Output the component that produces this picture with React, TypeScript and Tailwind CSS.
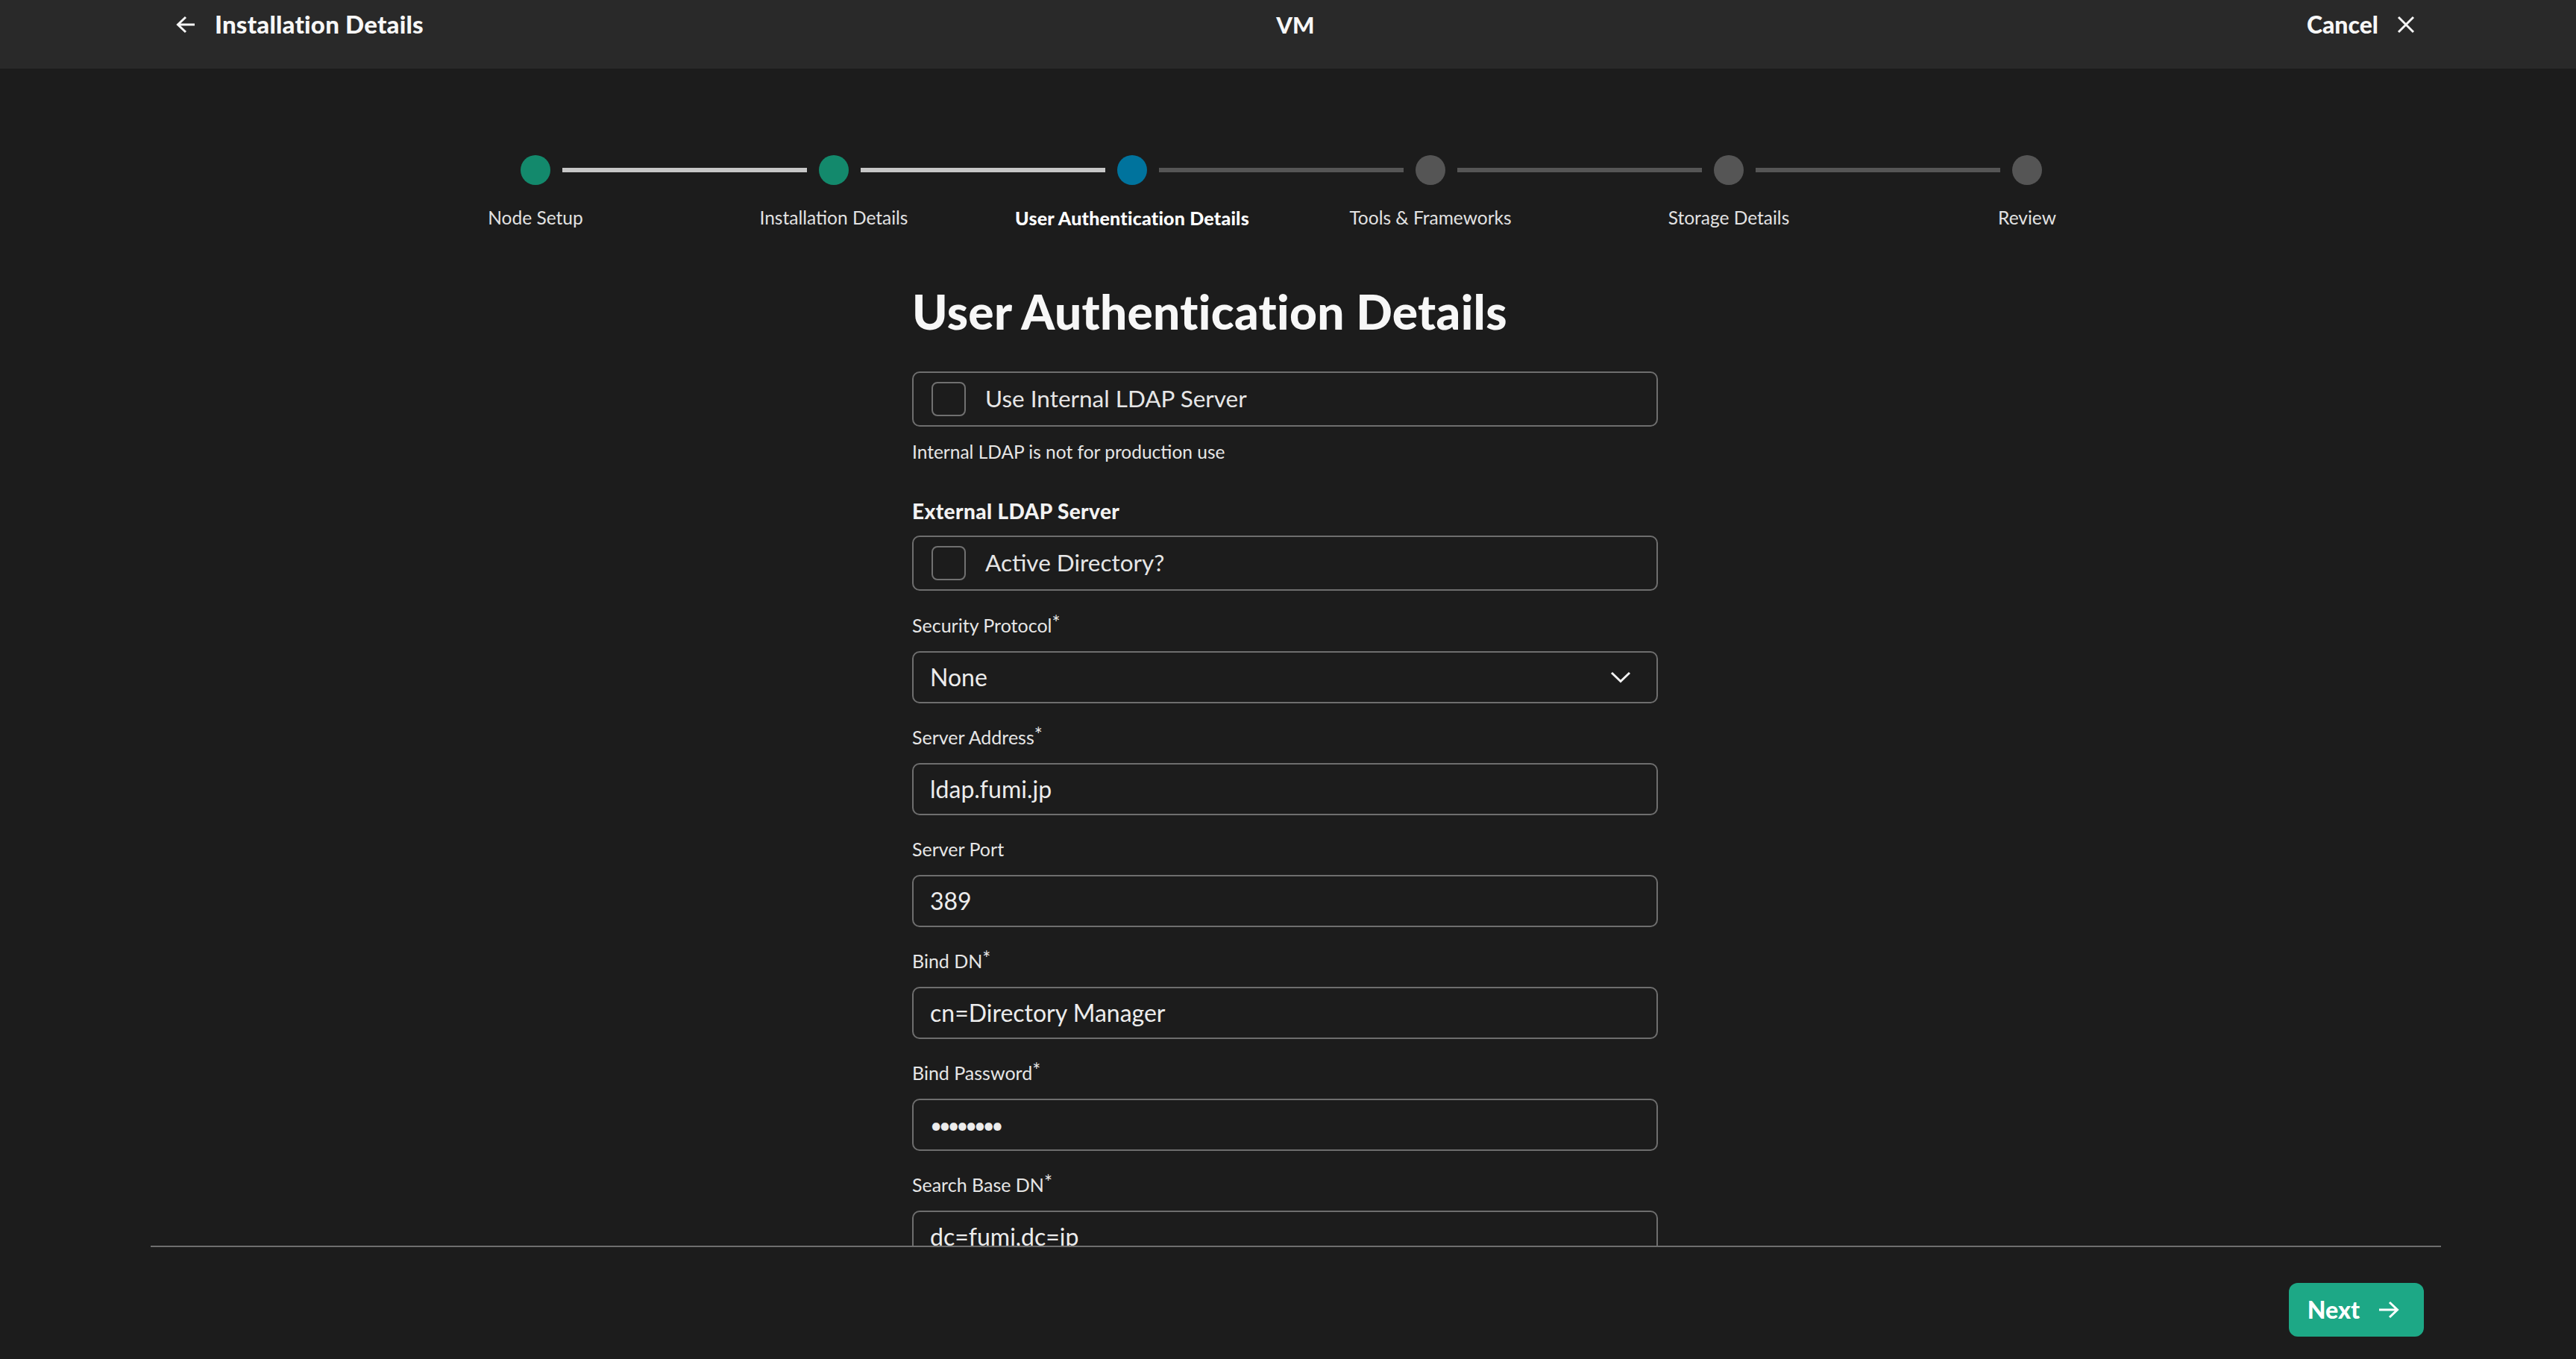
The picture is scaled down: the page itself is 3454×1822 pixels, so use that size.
import React from "react";

const steps = [
  "Node Setup",
  "Installation Details",
  "User Authentication Details",
  "Tools & Frameworks",
  "Storage Details",
  "Review",
];
const current = 2;

const fields = [
  { label: "Security Protocol", required: true, value: "None", select: true },
  { label: "Server Address", required: true, value: "ldap.fumi.jp" },
  { label: "Server Port", required: false, value: "389" },
  { label: "Bind DN", required: true, value: "cn=Directory Manager" },
  { label: "Bind Password", required: true, value: "••••••••", secret: true },
  { label: "Search Base DN", required: true, value: "dc=fumi,dc=jp" },
  { label: "User Search Filter", required: false, value: "(objectClass=person)" },
];

const Stepper = () => (
  <div className="flex justify-center pt-[116px] pr-[18px]">
    <div className="flex">
      {steps.map((s, i) => {
        const circle =
          i < current ? "bg-[#13896c]" : i === current ? "bg-[#00739d]" : "bg-[#555555]";
        const leftLine = i === 0 ? "bg-transparent" : i <= current ? "bg-[#c6c6c6]" : "bg-[#555555]";
        const rightLine =
          i === steps.length - 1 ? "bg-transparent" : i + 1 <= current ? "bg-[#c6c6c6]" : "bg-[#555555]";
        return (
          <div key={s} className="flex w-[400px] flex-col items-center">
            <div className="flex w-full items-center">
              <div className={`h-[6px] flex-1 ${leftLine}`} />
              <div className={`mx-[16px] h-[40px] w-[40px] rounded-full ${circle}`} />
              <div className={`h-[6px] flex-1 ${rightLine}`} />
            </div>
            <div
              className={`mt-[28px] whitespace-nowrap leading-[32px] ${
                i === current
                  ? "text-[25px] font-black tracking-[0.2px] text-white"
                  : "text-[24.5px] text-[#e2e2e2]"
              }`}
            >
              {s}
            </div>
          </div>
        );
      })}
    </div>
  </div>
);

const CheckRow = ({ label }: { label: string }) => (
  <div className="flex h-[74px] items-center rounded-[10px] border-2 border-[#6e6e6e] pl-[24px]">
    <div className="h-[46px] w-[46px] rounded-[8px] border-2 border-[#707070]" />
    <span className="ml-[26px] text-[31.5px] text-[#e6e6e6]">{label}</span>
  </div>
);

const Field = ({
  label,
  required,
  value,
  select,
  secret,
}: {
  label: string;
  required: boolean;
  value: string;
  select?: boolean;
  secret?: boolean;
}) => (
  <div className="mt-[29px] flex flex-col first:mt-[30px]">
    <label className="text-[25px] leading-[32px] text-[#e6e6e6]">
      {label}
      {required && <span className="relative -top-[3px] text-[26px]">*</span>}
    </label>
    <div className="mt-[19px] flex h-[70px] items-center justify-between rounded-[10px] border-2 border-[#6e6e6e] pl-[22px] pr-[34px]">
      <span
        className={
          secret ? "text-[28px] tracking-[-4.5px] text-[#ececec]" : "text-[32px] text-[#ececec]"
        }
      >
        {value}
      </span>
      {select && (
        <svg width="28" height="16" viewBox="0 0 28 16" fill="none">
          <path d="M2 2 L14 13.5 L26 2" stroke="#f2f2f2" strokeWidth="3" />
        </svg>
      )}
    </div>
  </div>
);

export default function App() {
  return (
    <div className="flex h-[1822px] w-[3454px] flex-col overflow-hidden bg-[#1c1c1c] font-[Lato,'Liberation_Sans',sans-serif] text-white">
      <header className="grid h-[92px] shrink-0 grid-cols-[1fr_auto_1fr] items-center bg-[#292929] pb-[26px] pl-[236px] pr-[216px]">
        <div className="flex items-center gap-[26px]">
          <svg width="26" height="24" viewBox="0 0 26 24" fill="none">
            <path d="M25 12 H3 M13 2 L2.5 12 L13 22" stroke="#f5f5f5" strokeWidth="3" />
          </svg>
          <span className="text-[33px] font-black tracking-[0.2px] text-[#f7f7f7]">
            Installation Details
          </span>
        </div>
        <div className="text-[31px] font-black text-[#f7f7f7]">VM</div>
        <div className="flex items-center justify-end gap-[25px]">
          <span className="text-[32px] font-black text-[#f7f7f7]">Cancel</span>
          <svg width="24" height="24" viewBox="0 0 24 24" fill="none">
            <path d="M2 2 L22 22 M22 2 L2 22" stroke="#f5f5f5" strokeWidth="3" />
          </svg>
        </div>
      </header>

      <main className="h-[1578px] shrink-0 overflow-hidden">
        <Stepper />
        <div className="flex justify-center pr-[8px]">
          <div className="flex w-[1000px] flex-col">
            <h1 className="mt-[74px] text-[64px] font-black leading-[72px] tracking-[0.3px] text-[#f7f7f7]">
              User Authentication Details
            </h1>
            <div className="mt-[44px]">
              <CheckRow label="Use Internal LDAP Server" />
            </div>
            <p className="mt-[18px] text-[24.5px] leading-[32px] text-[#e6e6e6]">
              Internal LDAP is not for production use
            </p>
            <h2 className="mt-[47px] text-[28px] font-black leading-[32px] tracking-[0.4px] text-[#f2f2f2]">
              External LDAP Server
            </h2>
            <div className="mt-[17px]">
              <CheckRow label="Active Directory?" />
            </div>
            <div className="flex flex-col">
              {fields.map((f) => (
                <Field key={f.label} {...f} />
              ))}
            </div>
          </div>
        </div>
      </main>

      <footer className="ml-[202px] mr-[181px] flex h-[152px] shrink-0 justify-end border-t-2 border-[#6e6e6e] pr-[23px] pt-[48px]">
        <button className="flex h-[72px] items-center gap-[25px] self-start rounded-[12px] bg-[#1da886] pl-[25px] pr-[33px]">
          <span className="text-[32px] font-black text-white">Next</span>
          <svg width="28" height="24" viewBox="0 0 28 24" fill="none">
            <path d="M1 12 H25 M15 2 L25.5 12 L15 22" stroke="#ffffff" strokeWidth="3" />
          </svg>
        </button>
      </footer>
    </div>
  );
}
